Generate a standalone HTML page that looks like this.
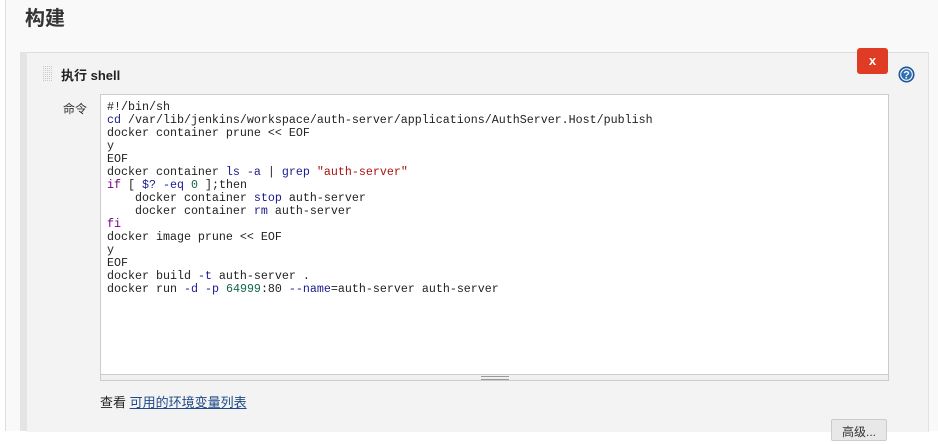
<!DOCTYPE html>
<html><head><meta charset="utf-8"><style>
body{margin:0;width:938px;height:431px;overflow:hidden;background:#fff;font-family:"Liberation Sans","Noto Sans CJK SC",sans-serif;position:relative}
.page{position:absolute;left:5px;top:0;width:933px;height:431px;background:#f9f9f9;border-left:1px solid #ddd}
h1{position:absolute;left:25px;top:2px;margin:0;font-size:20px;font-weight:bold;color:#333;font-family:"Noto Sans CJK SC",sans-serif}
.strip{position:absolute;left:20px;top:52px;width:7px;height:379px;background:#e4e4e4}
.panel{position:absolute;left:27px;top:52px;width:901px;height:379px;background:#f3f3f3;border-top:1px solid #ddd;border-right:1px solid #e2e2e2}
.grip{position:absolute;left:43px;top:66px;width:10px;height:16px;background-image:linear-gradient(90deg,transparent 1px,#f3f3f3 1px),linear-gradient(transparent 1px,#f3f3f3 1px);background-size:2px 2px;background-color:#c8c8c8}
.title{position:absolute;left:61px;top:65px;font-size:13px;font-weight:bold;color:#222}
.lbl{position:absolute;left:63px;top:100px;font-size:12px;color:#333}
.ta{position:absolute;left:100px;top:94px;width:787px;height:285px;background:#fff;border:1px solid #ccc}
.ta .bar{position:absolute;left:0;right:0;bottom:0;height:5px;background:#f0f0f0;border-top:1px solid #ccc}
.ta .bar i{position:absolute;left:380px;top:1px;width:28px;height:2px;border-top:1px solid #999;border-bottom:1px solid #999}
pre{position:absolute;left:6px;top:6px;margin:0;font-family:"Liberation Mono",monospace;font-size:11.67px;line-height:13px;color:#222}
.k{color:#1a1a8c}.p{color:#770088}.s{color:#a11}.n{color:#164}
.x{position:absolute;left:857px;top:48px;width:31px;height:26px;background:#e03b24;border-radius:3px;color:#fff;font-weight:bold;font-size:13px;text-align:center;line-height:26px}
.help{position:absolute;left:898px;top:66px;width:17px;height:17px}
.env{position:absolute;left:100px;top:392px;font-size:13px;color:#222}
.env a{color:#204a87;text-decoration:underline}
.btn{position:absolute;left:831px;top:419px;width:54px;height:20px;background:#e8e8e8;border:1px solid #ccc;border-radius:2px;font-size:12px;text-align:center;line-height:24px;color:#333}
</style></head><body>
<div class="page"></div>
<h1>构建</h1>
<div class="strip"></div>
<div class="panel"></div>
<div class="grip"></div>
<div class="title">执行 shell</div>
<div class="lbl">命令</div>
<div class="ta"><pre>#!/bin/sh
<span class="k">cd</span> /var/lib/jenkins/workspace/auth-server/applications/AuthServer.Host/publish
docker container prune &lt;&lt; EOF
y
EOF
docker container <span class="k">ls</span> <span class="k">-a</span> | <span class="k">grep</span> <span class="s">"auth-server"</span>
<span class="p">if</span> [ <span class="k">$?</span> <span class="k">-eq</span> <span class="n">0</span> ];then
    docker container <span class="k">stop</span> auth-server
    docker container <span class="k">rm</span> auth-server
<span class="p">fi</span>
docker image prune &lt;&lt; EOF
y
EOF
docker build <span class="k">-t</span> auth-server .
docker run <span class="k">-d</span> <span class="k">-p</span> <span class="n">64999</span>:80 <span class="k">--name</span>=auth-server auth-server</pre><div class="bar"><i></i></div></div>
<div class="x">x</div>
<svg class="help" viewBox="0 0 17 17"><circle cx="8.5" cy="8.5" r="7.5" fill="#2a6db5" stroke="#1b4e8a"/><circle cx="8.5" cy="8.5" r="5.8" fill="none" stroke="#fff" stroke-width="1"/><text x="8.5" y="12.5" font-size="11" font-weight="bold" fill="#fff" text-anchor="middle" font-family="Liberation Sans">?</text></svg>
<div class="env">查看 <a>可用的环境变量列表</a></div>
<div class="btn">高级...</div>
</body></html>
